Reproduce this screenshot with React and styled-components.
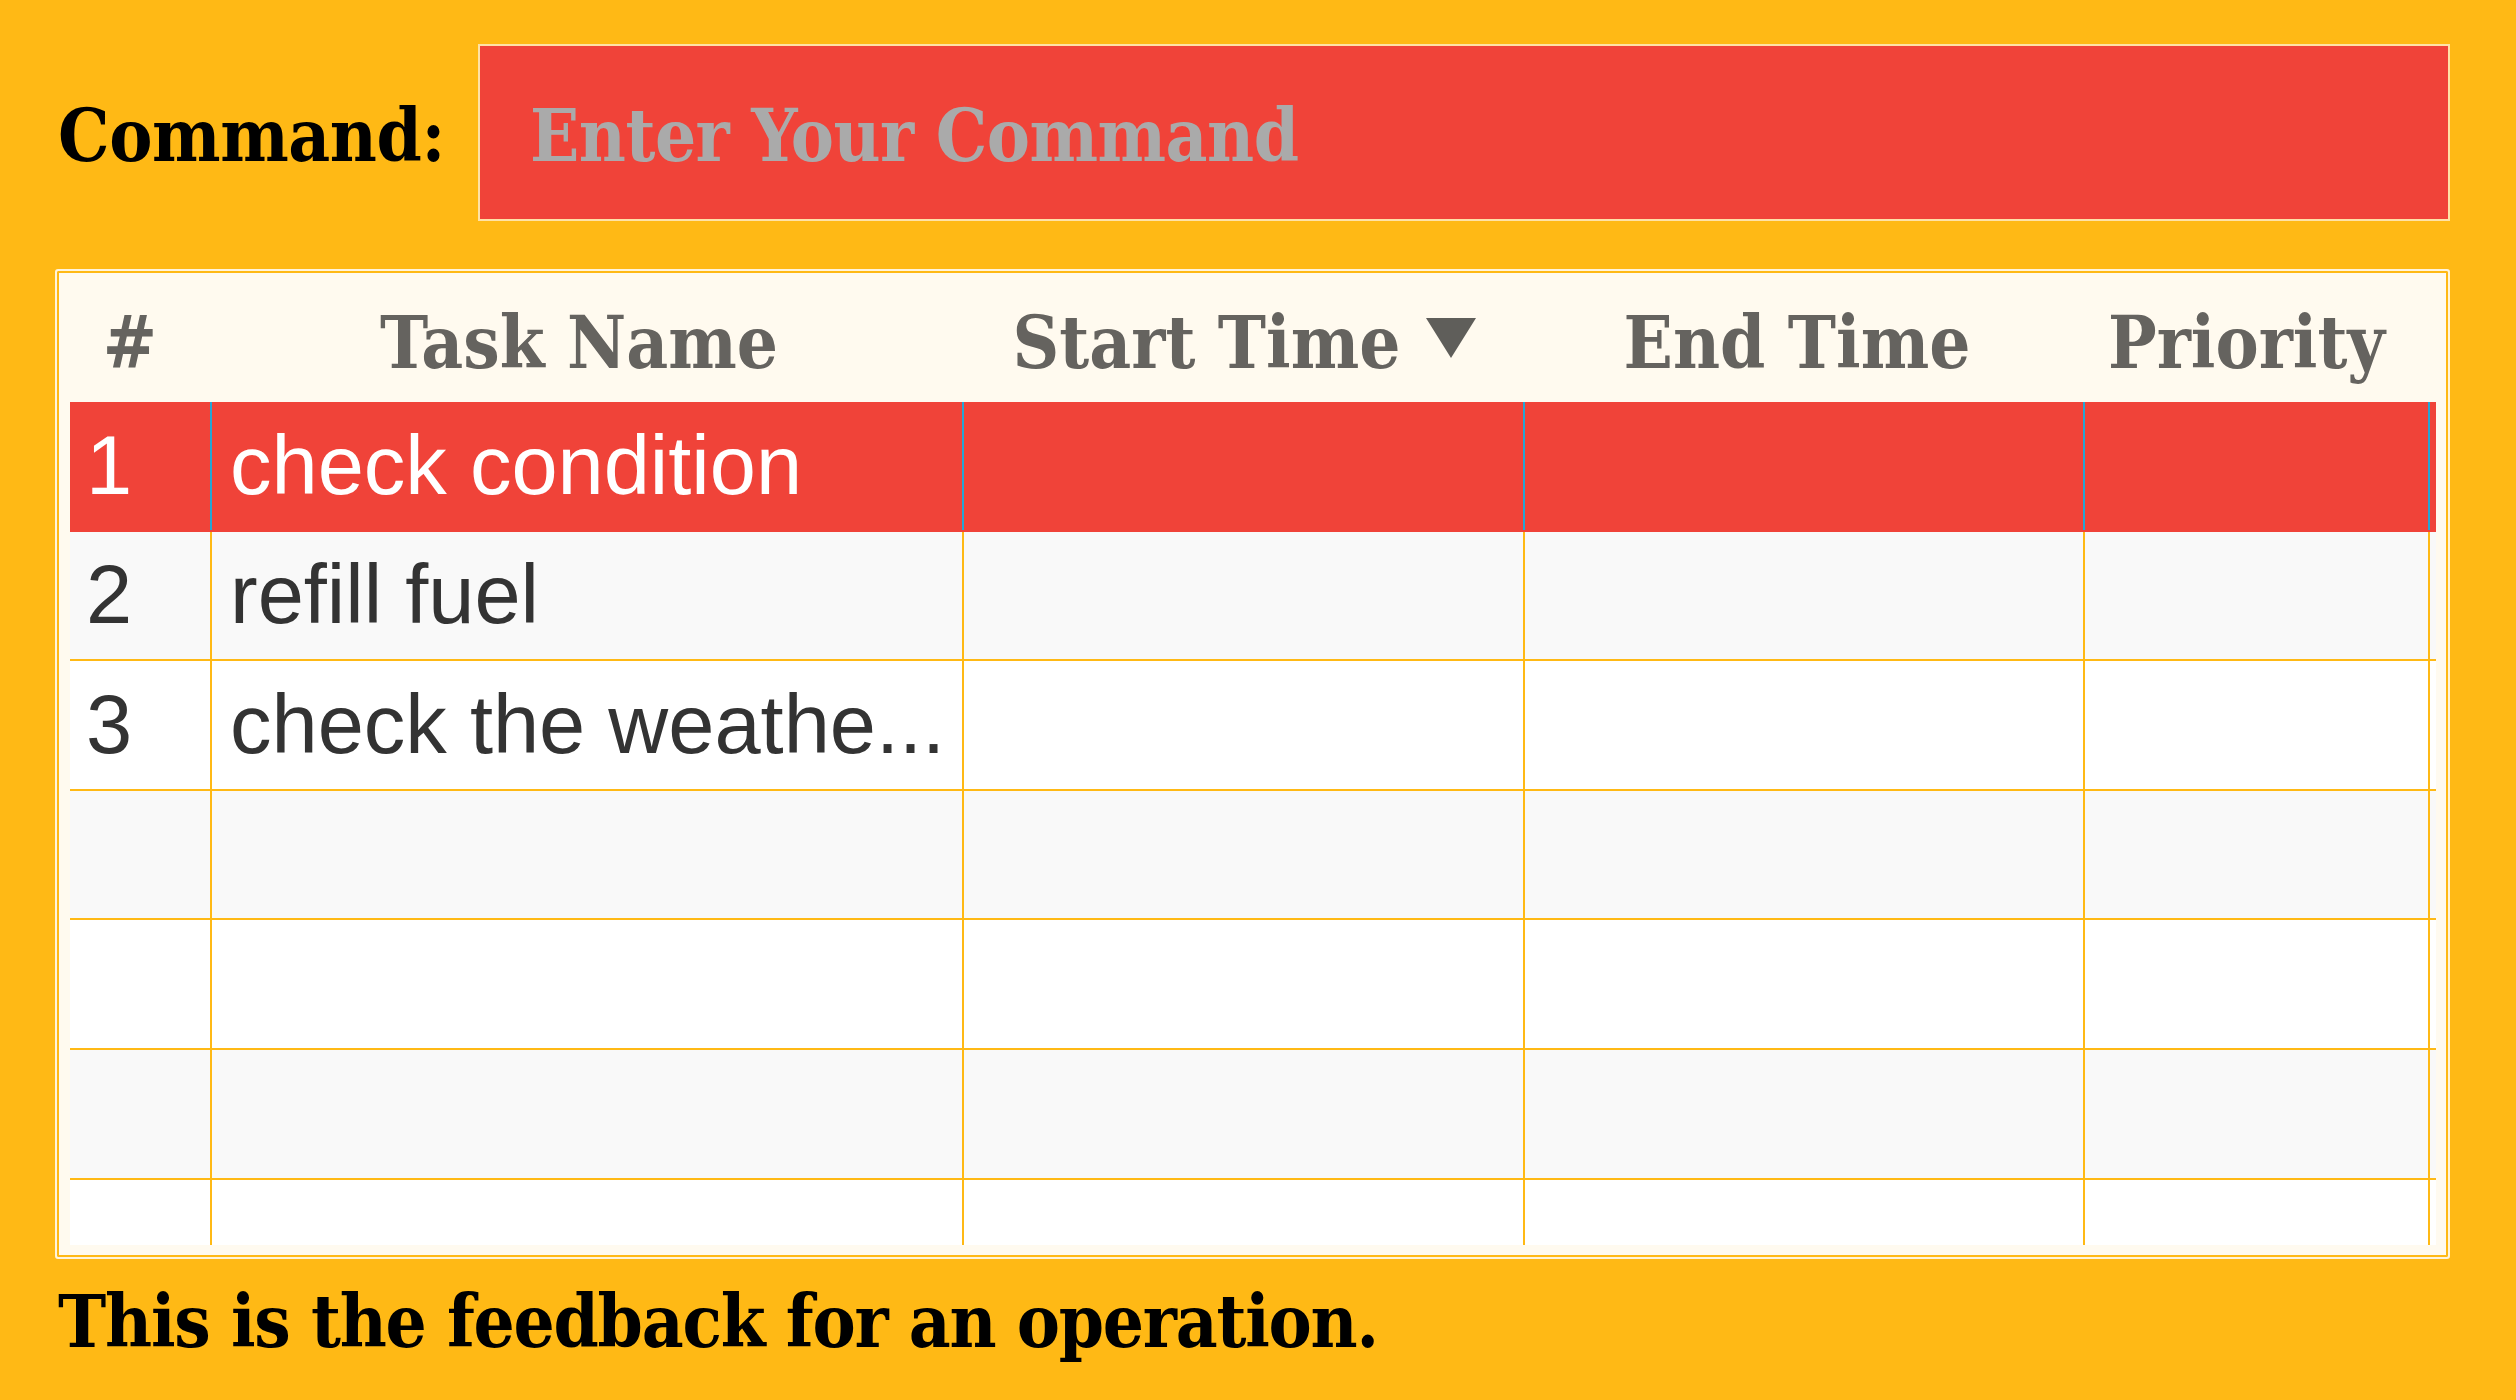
import React from 'react';
import styled, { createGlobalStyle } from 'styled-components';

const colors = {
  amber: '#FFB915',
  red: '#F04339',
  cream: '#FFFAEF',
  light: '#FFF4DC',
  inputBorder: '#FFE2A6',
  header: '#65635F',
  text: '#333333',
  stripe: '#F9F9F9',
  focus: '#25A5D5',
  placeholder: '#AAAAAA',
};

const slab = `"DejaVu Serif Condensed", "DejaVu Serif", serif`;
const sans = `"Liberation Sans", Arial, sans-serif`;

const COLUMNS = '142px 752px 561px 560px 345px 6px';

const GlobalStyle = createGlobalStyle`
  html, body {
    margin: 0;
    padding: 0;
    background: ${colors.amber};
  }
  * {
    box-sizing: border-box;
  }
`;

const Page = styled.div`
  width: 2516px;
  height: 1400px;
  padding: 44px 66px 0 55px;
  background: ${colors.amber};
  display: flex;
  flex-direction: column;
  overflow: hidden;
`;

const CommandRow = styled.div`
  display: flex;
  align-items: center;
  height: 177px;
`;

const CommandLabel = styled.label`
  width: 423px;
  flex-shrink: 0;
  padding: 6px 0 0 3px;
  font-family: ${slab};
  font-stretch: condensed;
  font-weight: bold;
  font-size: 72px;
  letter-spacing: -0.4px;
  color: #000;
`;

const CommandInput = styled.input`
  flex: 1;
  height: 177px;
  margin: 0;
  padding: 6px 0 0 50px;
  border: 2px solid ${colors.inputBorder};
  border-radius: 0;
  outline: none;
  background: ${colors.red};
  font-family: ${slab};
  font-stretch: condensed;
  font-weight: bold;
  font-size: 72px;
  letter-spacing: -0.5px;
  color: #fff;

  &::placeholder {
    color: ${colors.placeholder};
    opacity: 1;
  }
`;

const TableFrame = styled.div`
  margin-top: 48px;
  padding: 2px 12px 12px 13px;
  border: 2px solid ${colors.light};
  border-radius: 3px;
  box-shadow: inset 0 0 0 2px ${colors.amber};
  background: ${colors.cream};
`;

const HeaderRow = styled.div`
  display: grid;
  grid-template-columns: ${COLUMNS};
  height: 129px;
`;

const HeaderCell = styled.div`
  display: flex;
  align-items: center;
  justify-content: center;
  gap: 26px;
  padding-top: 10px;
  padding-right: ${(p) => p.$shift || 0}px;
  font-family: ${slab};
  font-stretch: condensed;
  font-weight: bold;
  font-size: 72px;
  color: ${colors.header};
  white-space: nowrap;
  overflow: hidden;
`;

const SortArrow = styled.svg`
  width: 50px;
  height: 40px;
  margin-bottom: 10px;
  flex-shrink: 0;
`;

const Body = styled.div`
  height: 843px;
  overflow: hidden;
`;

const Row = styled.div`
  display: grid;
  grid-template-columns: ${COLUMNS};
  height: 129.6px;
  background: ${(p) => (p.$selected ? colors.red : p.$odd ? colors.stripe : '#fff')};
  border-bottom: 2px solid ${(p) => (p.$selected ? colors.red : colors.amber)};
`;

const Cell = styled.div`
  display: flex;
  align-items: center;
  padding-left: ${(p) => (p.$index ? 18 : 16)}px;
  border-right: 2px solid ${(p) => (p.$selected ? colors.focus : colors.amber)};
  font-family: ${sans};
  font-size: 83px;
  color: ${(p) => (p.$selected ? '#fff' : colors.text)};
  white-space: nowrap;
  overflow: hidden;
`;

const Filler = styled.div``;

const Feedback = styled.div`
  margin-top: 20px;
  padding-left: 3px;
  font-family: ${slab};
  font-stretch: condensed;
  font-weight: bold;
  font-size: 72px;
  letter-spacing: -1.2px;
  color: #000;
`;

const tasks = [
  { id: 1, name: 'check condition' },
  { id: 2, name: 'refill fuel' },
  { id: 3, name: 'check the weathe...' },
];

const ROW_COUNT = 7;

const App = () => {
  const rows = Array.from({ length: ROW_COUNT }, (_, i) => tasks[i] || null);

  return (
    <>
      <GlobalStyle />
      <Page>
        <CommandRow>
          <CommandLabel htmlFor="command">Command:</CommandLabel>
          <CommandInput id="command" placeholder="Enter Your Command" />
        </CommandRow>

        <TableFrame>
          <HeaderRow>
            <HeaderCell $shift={22}>#</HeaderCell>
            <HeaderCell $shift={18}>Task Name</HeaderCell>
            <HeaderCell>
              Start Time
              <SortArrow viewBox="0 0 50 40">
                <polygon points="0,0 50,0 25,40" fill="#5F5E5A" />
              </SortArrow>
            </HeaderCell>
            <HeaderCell $shift={16}>End Time</HeaderCell>
            <HeaderCell $shift={22}>Priority</HeaderCell>
            <Filler />
          </HeaderRow>

          <Body>
            {rows.map((task, i) => {
              const selected = i === 0;
              return (
                <Row key={i} $selected={selected} $odd={i % 2 === 1}>
                  <Cell $selected={selected}>{task && task.id}</Cell>
                  <Cell $selected={selected} $index>
                    {task && task.name}
                  </Cell>
                  <Cell $selected={selected} />
                  <Cell $selected={selected} />
                  <Cell $selected={selected} />
                  <Filler />
                </Row>
              );
            })}
          </Body>
        </TableFrame>

        <Feedback>This is the feedback for an operation.</Feedback>
      </Page>
    </>
  );
};

export default App;
